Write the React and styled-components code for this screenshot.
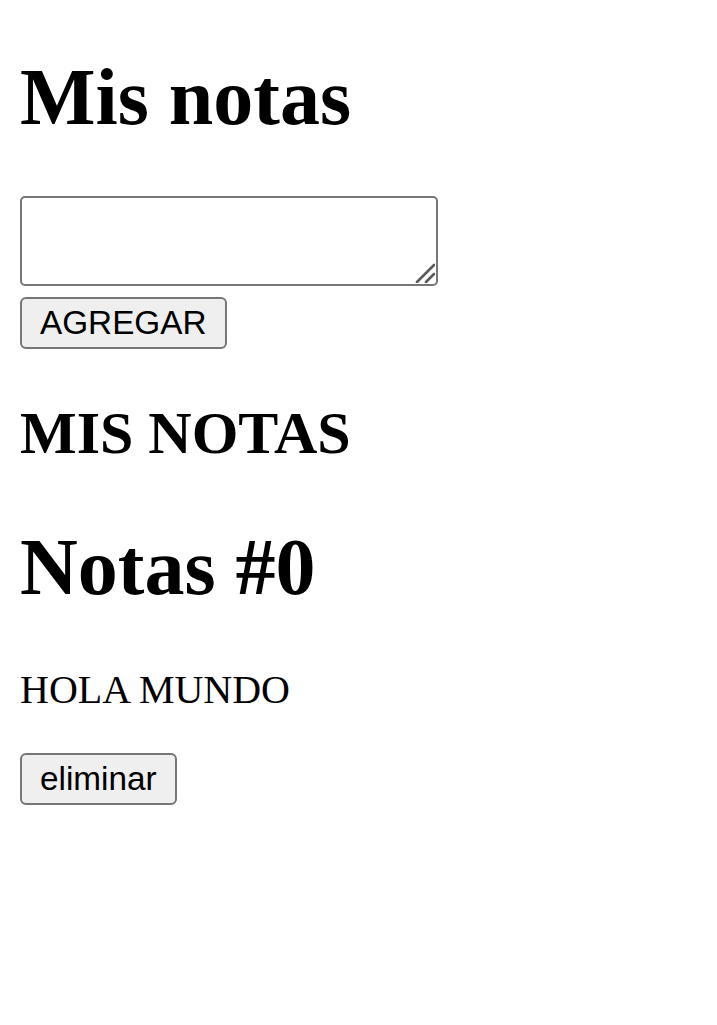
import React, { useState } from "react";
import styled, { createGlobalStyle } from "styled-components";

const GlobalStyle = createGlobalStyle`
  html, body {
    background: #fff;
  }
  body {
    margin: 20px;
    font-family: "Liberation Serif", "Times New Roman", serif;
    font-size: 40px;
    color: #000;
  }
`;

const Title = styled.h1`
  font-size: 80px;
  font-weight: bold;
  margin: ${(props) => (props.first ? "31.6px" : "53.6px")} 0 53.6px;
`;

const Form = styled.div`
  display: flex;
  flex-direction: column;
  align-items: flex-start;
  gap: 11px;
`;

const InputWrap = styled.div`
  position: relative;
  width: 418px;
  height: 90px;
`;

const NoteInput = styled.textarea`
  display: block;
  box-sizing: border-box;
  width: 418px;
  height: 90px;
  padding: 5px;
  border: 2.5px solid #767676;
  border-radius: 5px;
  font-family: "Liberation Mono", monospace;
  font-size: 33px;
  background: #fff;
  resize: none;
`;

const Grip = styled.svg`
  position: absolute;
  right: 3px;
  bottom: 3px;
  width: 20px;
  height: 20px;
  pointer-events: none;
`;

const Button = styled.button`
  box-sizing: border-box;
  height: 52px;
  padding: 2.5px 18px;
  border: 2.5px solid #767676;
  border-radius: 6px;
  background: #efefef;
  color: #000;
  font-family: "Liberation Sans", Arial, sans-serif;
  font-size: 33.3px;
  cursor: pointer;
`;

const Subtitle = styled.h2`
  font-size: 60px;
  font-weight: bold;
  margin: 49.8px 0;
`;

const NoteText = styled.p`
  margin: 40px 0;
`;

export default function App() {
  const [text, setText] = useState("");
  const [notes, setNotes] = useState(["HOLA MUNDO"]);

  const add = () => {
    if (!text.trim()) return;
    setNotes([...notes, text]);
    setText("");
  };

  return (
    <>
      <GlobalStyle />
      <Title first>Mis notas</Title>
      <Form>
        <InputWrap>
          <NoteInput value={text} onChange={(e) => setText(e.target.value)} />
          <Grip viewBox="0 0 20 20">
            <path d="M2 19 L19 2 M11 19 L19 11" stroke="#5a5a5a" strokeWidth="2.6" strokeLinecap="round" />
          </Grip>
        </InputWrap>
        <Button onClick={add}>AGREGAR</Button>
      </Form>
      <Subtitle>MIS NOTAS</Subtitle>
      {notes.map((n, i) => (
        <div key={i}>
          <Title>Notas #{i}</Title>
          <NoteText>{n}</NoteText>
          <Button onClick={() => setNotes(notes.filter((_, j) => j !== i))}>
            eliminar
          </Button>
        </div>
      ))}
    </>
  );
}
